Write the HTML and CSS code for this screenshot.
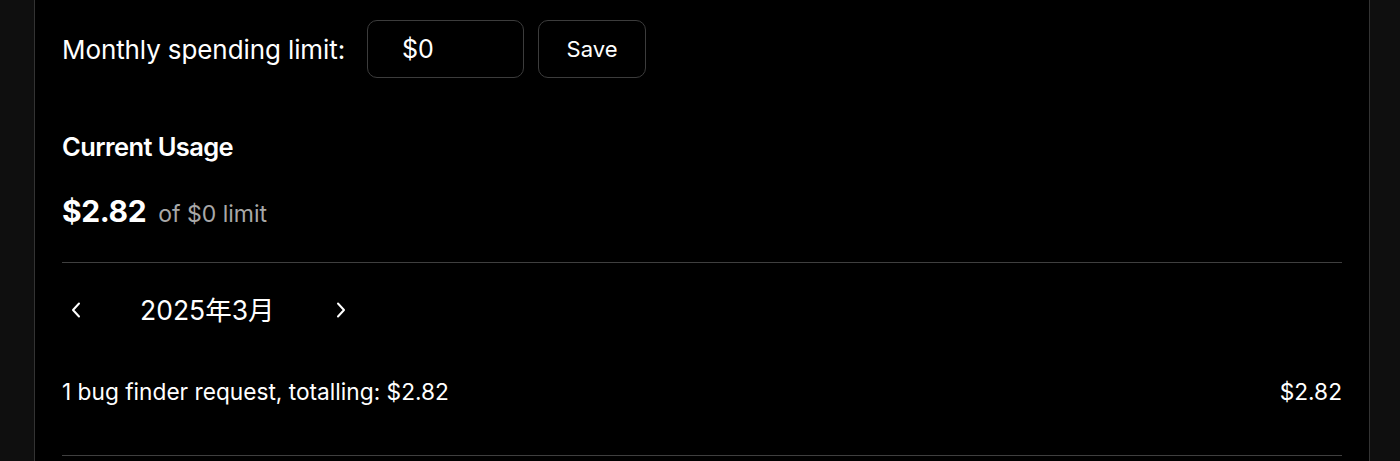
FILE: index.html
```html
<!DOCTYPE html>
<html lang="en">
<head>
    <meta charset="UTF-8">
    <meta name="viewport" content="width=device-width, initial-scale=1.0">
    <title>Usage</title>
    <link rel="stylesheet" href="styles.css">
</head>
<body>
    <div class="panel">
        <div class="limit-row">
            <label for="limitInput">Monthly spending limit:</label>
            <input id="limitInput" class="limit-input" type="text" value="$0">
            <button class="save-btn">Save</button>
        </div>

        <h2 class="usage-title">Current Usage</h2>
        <div class="usage-total">
            <span class="amount">$2.82</span>
            <span class="of-limit">of $0 limit</span>
        </div>

        <div class="month-nav">
            <button class="nav-btn" aria-label="Previous month">
                <svg width="12" height="18" viewBox="0 0 12 18"><path d="M9 2.5 L3 9 L9 15.5" fill="none" stroke="#fff" stroke-width="2" stroke-linecap="round" stroke-linejoin="round"/></svg>
            </button>
            <span class="month">2025年3月</span>
            <button class="nav-btn" aria-label="Next month">
                <svg width="12" height="18" viewBox="0 0 12 18"><path d="M3 2.5 L9 9 L3 15.5" fill="none" stroke="#fff" stroke-width="2" stroke-linecap="round" stroke-linejoin="round"/></svg>
            </button>
        </div>

        <div class="request-row">
            <span>1 bug finder request, totalling: $2.82</span>
            <span>$2.82</span>
        </div>
    </div>
</body>
</html>
```

FILE: styles.css
```css
* {
    margin: 0;
    padding: 0;
    box-sizing: border-box;
}
body {
    background: #0f0f0f;
    color: #fff;
    font-family: Inter, "Noto Sans CJK JP", sans-serif;
    height: 461px;
    overflow: hidden;
}
.panel {
    margin-left: 34px;
    width: 1336px;
    min-height: 461px;
    background: #000;
    border-left: 1px solid #333;
    border-right: 1px solid #333;
    padding: 20px 27px 0;
}
.limit-row {
    display: flex;
    align-items: center;
}
.limit-row label {
    font-size: 26px;
    letter-spacing: -0.1px;
}
.limit-input {
    margin-left: 22px;
    width: 157px;
    height: 58px;
    border: 1px solid #3c3c3c;
    border-radius: 10px;
    background: #000;
    color: #fff;
    font-family: inherit;
    font-size: 25px;
    padding-left: 34px;
    outline: none;
}
.save-btn {
    margin-left: 14px;
    width: 108px;
    height: 58px;
    border: 1px solid #3c3c3c;
    border-radius: 10px;
    background: #000;
    color: #fff;
    font-family: inherit;
    font-size: 22px;
    cursor: pointer;
}
.usage-title {
    margin-top: 53px;
    font-size: 25.5px;
    font-weight: 600;
    letter-spacing: -0.6px;
    line-height: 32px;
}
.usage-total {
    margin-top: 30px;
    display: flex;
    align-items: baseline;
    gap: 12px;
    padding-bottom: 33px;
    border-bottom: 1px solid #3f3f3f;
}
.amount {
    font-size: 30px;
    font-weight: 700;
    letter-spacing: -0.4px;
}
.of-limit {
    font-size: 23px;
    color: #a8a8a8;
}
.month-nav {
    display: flex;
    align-items: center;
    height: 94px;
    padding-bottom: 3px;
}
.nav-btn {
    background: none;
    border: none;
    width: 28px;
    height: 28px;
    display: flex;
    align-items: center;
    justify-content: center;
    cursor: pointer;
    margin-top: 2px;
}
.month {
    font-size: 26.5px;
    margin: 0 52px 0 50px;
}
.request-row {
    display: flex;
    justify-content: space-between;
    align-items: center;
    height: 99px;
    padding-bottom: 30px;
    font-size: 22.7px;
    border-bottom: 1px solid #3f3f3f;
}
```
